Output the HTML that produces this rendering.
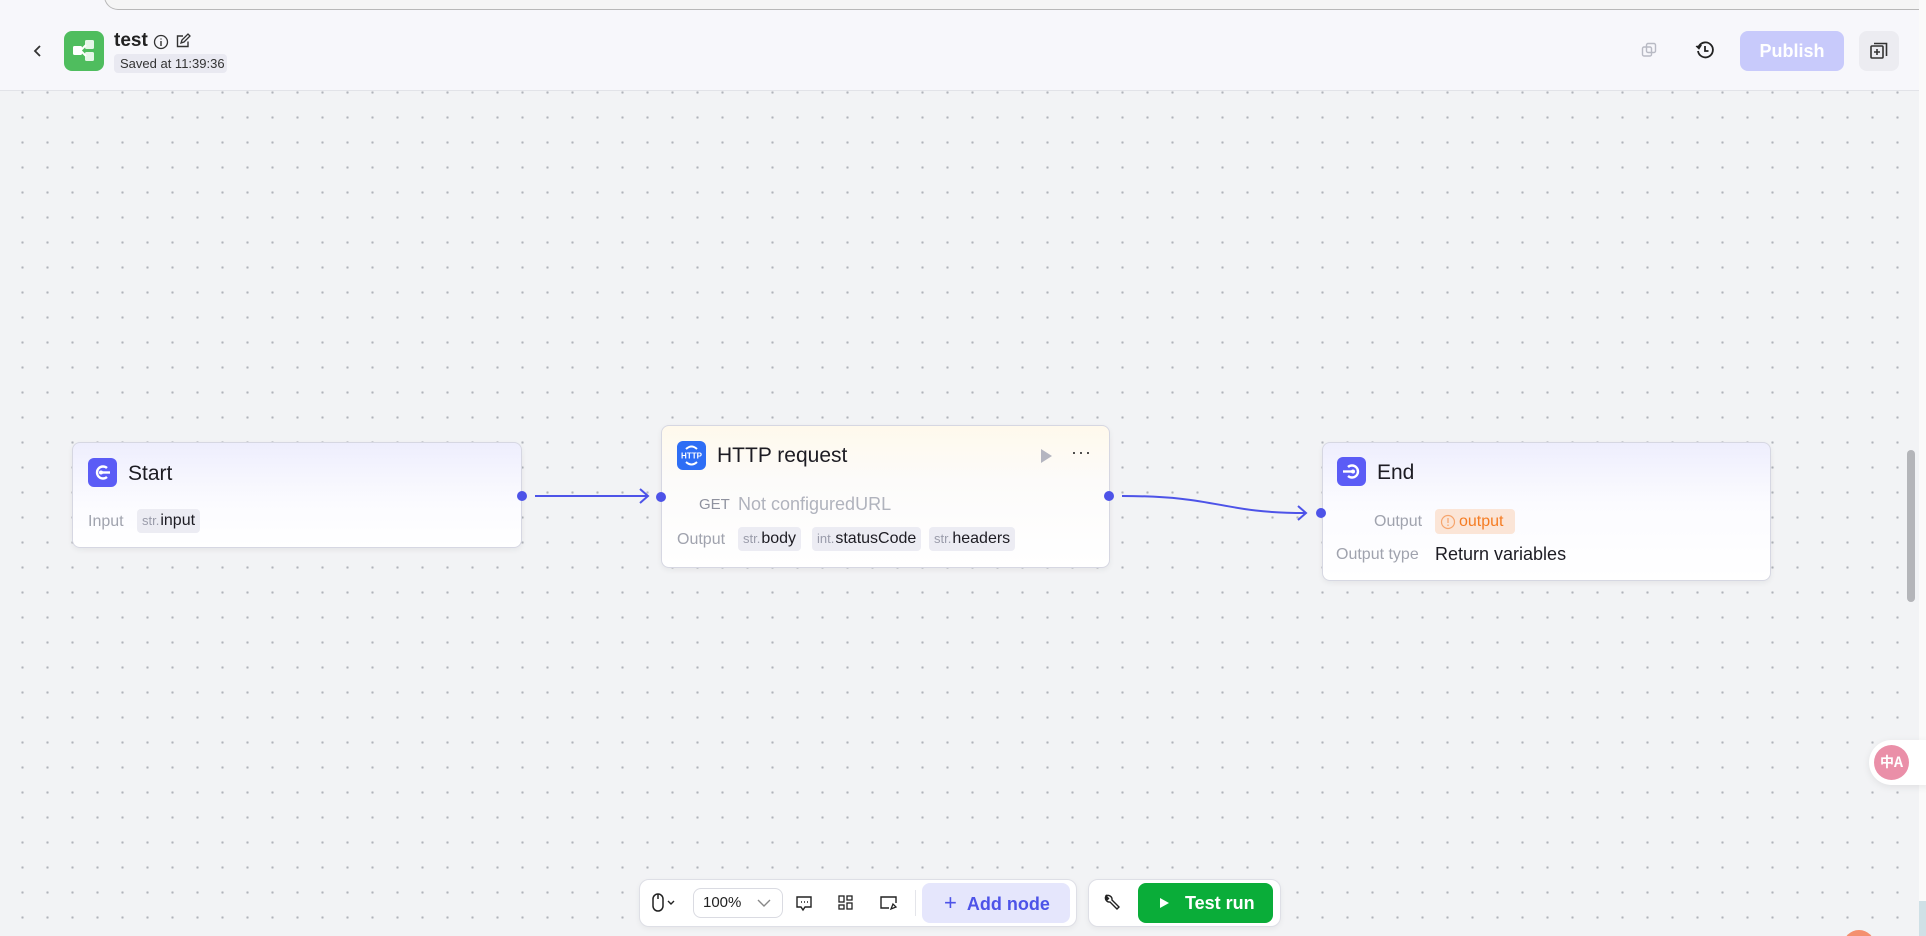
<!DOCTYPE html>
<html><head><meta charset="utf-8"><style>
*{box-sizing:border-box;margin:0;padding:0}
html,body{width:1926px;height:936px;overflow:hidden}
body{position:relative;font-family:"Liberation Sans","Noto Sans CJK SC",sans-serif;background:#f2f3f5;color:#1d1c23}
.canvas{position:absolute;left:0;top:90px;width:1919px;height:846px;background-color:#f2f3f5;background-image:radial-gradient(circle,#b0b3ba 1.1px,transparent 1.3px);background-size:25px 25px;background-position:10px 15px}
.hdr{position:absolute;left:0;top:0;width:1926px;height:91px;background:#f7f7fb;border-bottom:1px solid #e2e3e8}
.topbar{position:absolute;left:104px;top:-6px;width:1830px;height:16px;border:1px solid #b8b8b8;border-radius:0 0 0 14px;background:#f5f5f5;border-top:none}
.node{position:absolute;background:linear-gradient(180deg,#eeeefd 0,#fbfbff 60px,#fff 100%);border:1px solid #d6d7e2;border-radius:8px;box-shadow:0 2px 6px rgba(0,0,0,.06)}
.ico{position:absolute;width:29px;height:29px;border-radius:6px;background:#5b5cf6}
.title{position:absolute;font-size:21px;color:#1d1c23}
.lbl{position:absolute;font-size:16px;color:#a0a3ae}
.tag{position:absolute;height:24px;background:#ececf3;border-radius:4px;font-size:16px;color:#1d1c23;padding:0 5px;line-height:24px}
.tag i{font-style:normal;color:#9a9caa;font-size:13px;margin-right:1px}
.h{position:absolute;width:10px;height:10px;border-radius:50%;background:#4d53e8}
.bar{position:absolute;background:#fff;border:1px solid #dedfe6;border-radius:10px;box-shadow:0 2px 6px rgba(0,0,0,.05)}
</style></head><body>
<div class="canvas"></div>
<div class="hdr">
<div class="topbar"></div>
<svg style="position:absolute;left:31px;top:43px" width="14" height="16" viewBox="0 0 14 16"><path d="M9 3 L4 8 L9 13" fill="none" stroke="#333" stroke-width="1.8"/></svg>
<div style="position:absolute;left:64px;top:31px;width:40px;height:40px;border-radius:8px;background:#4fbd5e"></div>
<svg style="position:absolute;left:64px;top:31px" width="40" height="40" viewBox="0 0 40 40"><rect x="9" y="15" width="9" height="9" rx="1.5" fill="#fff"/><rect x="21" y="9" width="9" height="9" rx="1.5" fill="#e6f6e8"/><rect x="21" y="21" width="9" height="9" rx="1.5" fill="#e6f6e8"/><path d="M17 19 L22 14 M17 20 L22 25" stroke="#fff" stroke-width="2"/></svg>
<div style="position:absolute;left:114px;top:30px;font-size:19px;font-weight:bold;color:#222">test</div>
<svg style="position:absolute;left:153px;top:34px" width="16" height="16" viewBox="0 0 16 16"><circle cx="8" cy="8" r="6.5" fill="none" stroke="#333" stroke-width="1.3"/><path d="M8 7v5M8 4.5v1" stroke="#333" stroke-width="1.4"/></svg>
<svg style="position:absolute;left:175px;top:33px" width="16" height="16" viewBox="0 0 16 16"><path d="M13 8.5V13.5H2.5V3H8" fill="none" stroke="#333" stroke-width="1.4"/><path d="M6 10l1-3 6-6 2 2-6 6z" fill="none" stroke="#333" stroke-width="1.3"/></svg>
<div style="position:absolute;left:114px;top:54px;width:113px;height:19px;background:#e9e9f1;border-radius:4px;font-size:13px;line-height:19px;color:#333;padding-left:6px">Saved at 11:39:36</div>
<svg style="position:absolute;left:1641px;top:42px" width="16" height="16" viewBox="0 0 16 16"><rect x="1.5" y="5" width="9" height="9" rx="1.5" fill="none" stroke="#b8bac4" stroke-width="1.4"/><rect x="5.5" y="1.5" width="9" height="9" rx="1.5" fill="none" stroke="#b8bac4" stroke-width="1.4"/></svg>
<svg style="position:absolute;left:1695px;top:40px" width="20" height="20" viewBox="0 0 20 20"><path d="M4 6 A7.5 7.5 0 1 1 3 11" fill="none" stroke="#222" stroke-width="1.8"/><path d="M1 6 L4 9 L6.5 5" fill="#222" stroke="#222" stroke-width="1"/><path d="M10 6 V11 H13.5" fill="none" stroke="#222" stroke-width="1.8"/></svg>
<div style="position:absolute;left:1740px;top:31px;width:104px;height:40px;border-radius:8px;background:#c8cafb;color:#fff;font-size:18px;font-weight:bold;text-align:center;line-height:40px">Publish</div>
<div style="position:absolute;left:1859px;top:31px;width:40px;height:40px;border-radius:8px;background:#ececf1"></div>
<svg style="position:absolute;left:1869px;top:41px" width="20" height="20" viewBox="0 0 20 20"><rect x="2" y="5" width="12" height="12" rx="1" fill="none" stroke="#333" stroke-width="1.6"/><path d="M5 2.5H17.5V15" fill="none" stroke="#333" stroke-width="1.6"/><path d="M8 8v6M5 11h6" stroke="#333" stroke-width="1.6"/></svg>
</div>

<svg style="position:absolute;left:0;top:0" width="1926" height="936">
<path d="M535 496 L647 496" stroke="#4d53e8" stroke-width="2" fill="none"/>
<path d="M640 489 L648 496 L640 503" stroke="#4d53e8" stroke-width="2" fill="none"/>
<path d="M1122 496 C1220 496 1220 513 1305 513" stroke="#4d53e8" stroke-width="2" fill="none"/>
<path d="M1298 506 L1306 513 L1298 520" stroke="#4d53e8" stroke-width="2" fill="none"/>
</svg>

<div class="node" style="left:72px;top:442px;width:450px;height:106px">
<div class="ico" style="left:15px;top:15px"></div>
<svg style="position:absolute;left:15px;top:15px" width="29" height="29" viewBox="0 0 29 29"><path d="M19 10 A6 6 0 1 0 19 19" fill="none" stroke="#fff" stroke-width="2.4"/><path d="M13 14.5 H22" stroke="#fff" stroke-width="2.4"/><circle cx="13" cy="14.5" r="2" fill="#fff"/></svg>
<div class="title" style="left:55px;top:19px">Start</div>
<div class="lbl" style="left:15px;top:70px">Input</div>
<div class="tag" style="left:64px;top:66px"><i>str.</i>input</div>
</div>
<div class="h" style="left:517px;top:491px"></div>

<div class="node" style="left:661px;top:425px;width:449px;height:143px;background:linear-gradient(180deg,#fff9ec 0,#fcfbfa 55px,#fff 100%)">
<div class="ico" style="left:15px;top:15px;background:#2e6ef5"></div>
<svg style="position:absolute;left:15px;top:15px" width="29" height="29" viewBox="0 0 29 29"><path d="M9 8 Q14.5 3 20 8" fill="none" stroke="#fff" stroke-width="2"/><path d="M9 21 Q14.5 26 20 21" fill="none" stroke="#fff" stroke-width="2"/><text x="14.5" y="17.5" font-size="8" font-weight="bold" fill="#fff" text-anchor="middle" font-family="Liberation Sans">HTTP</text></svg>
<div class="title" style="left:55px;top:18px">HTTP request</div>
<svg style="position:absolute;left:377px;top:22px" width="14" height="16" viewBox="0 0 14 16"><path d="M2 1 L13 8 L2 15Z" fill="#b4b5c0"/></svg>
<div style="position:absolute;left:409px;top:16px;font-size:18px;letter-spacing:1px;color:#333">···</div>
<div class="lbl" style="left:37px;top:70px;font-size:15px;color:#8f929f">GET</div>
<div class="lbl" style="left:76px;top:68px;font-size:18px;color:#b0b3bd">Not configuredURL</div>
<div class="lbl" style="left:15px;top:105px">Output</div>
<div class="tag" style="left:76px;top:101px"><i>str.</i>body</div>
<div class="tag" style="left:150px;top:101px"><i>int.</i>statusCode</div>
<div class="tag" style="left:267px;top:101px"><i>str.</i>headers</div>
</div>
<div class="h" style="left:656px;top:492px"></div>
<div class="h" style="left:1104px;top:491px"></div>

<div class="node" style="left:1322px;top:442px;width:449px;height:139px">
<div class="ico" style="left:14px;top:14px"></div>
<svg style="position:absolute;left:14px;top:14px" width="29" height="29" viewBox="0 0 29 29"><path d="M11 10 A6 6 0 1 1 11 19" fill="none" stroke="#fff" stroke-width="2.4"/><path d="M6 14.5 H16" stroke="#fff" stroke-width="2.4"/><circle cx="16" cy="14.5" r="2" fill="#fff"/></svg>
<div class="title" style="left:54px;top:18px">End</div>
<div class="lbl" style="left:51px;top:70px">Output</div>
<div style="position:absolute;left:112px;top:66px;width:80px;height:25px;background:#fbe5d7;border-radius:4px;font-size:16px;line-height:25px;color:#f57c23;padding-left:24px">output</div>
<svg style="position:absolute;left:117px;top:71px" width="16" height="16" viewBox="0 0 16 16"><circle cx="8" cy="8" r="6.5" fill="none" stroke="#f6a56e" stroke-width="1.2"/><path d="M8 4v5M8 10.5v1.5" stroke="#f6a56e" stroke-width="1.2"/></svg>
<div class="lbl" style="left:13px;top:103px">Output type</div>
<div style="position:absolute;left:112px;top:101px;font-size:18px;color:#1d1c23">Return variables</div>
</div>
<div class="h" style="left:1316px;top:508px"></div>

<div style="position:absolute;left:1907px;top:450px;width:8px;height:152px;border-radius:4px;background:#b4b5b9"></div>
<div style="position:absolute;left:1919px;top:0;width:7px;height:936px;background:#fafafa"></div>
<div style="position:absolute;left:1919px;top:901px;width:7px;height:35px;background:#cfe0e6"></div>

<div style="position:absolute;left:1869px;top:740px;width:60px;height:45px;border-radius:23px 0 0 23px;background:#fff;box-shadow:0 2px 8px rgba(0,0,0,.08)"></div>
<div style="position:absolute;left:1874px;top:745px;width:35px;height:35px;border-radius:50%;background:#ea8fa8;color:#fff;font-size:14px;font-weight:bold;text-align:center;line-height:35px;font-family:'Noto Sans CJK SC',sans-serif">中A</div>
<div style="position:absolute;left:1843px;top:930px;width:32px;height:32px;border-radius:50%;background:#f4906f"></div>

<div class="bar" style="left:639px;top:879px;width:438px;height:48px"></div>
<svg style="position:absolute;left:650px;top:891px" width="30" height="24" viewBox="0 0 30 24"><rect x="3" y="3" width="10" height="17" rx="5" fill="none" stroke="#222" stroke-width="1.5"/><path d="M8 3v5" stroke="#222" stroke-width="1.5"/><path d="M18 10l3 3 3-3" fill="none" stroke="#222" stroke-width="1.4"/></svg>
<div style="position:absolute;left:693px;top:888px;width:90px;height:30px;border:1px solid #dadbe2;border-radius:8px;font-size:15px;line-height:28px;padding-left:9px;color:#222">100%</div>
<svg style="position:absolute;left:756px;top:897px" width="16" height="12" viewBox="0 0 16 12"><path d="M2 3l6 6 6-6" fill="none" stroke="#888" stroke-width="1.4"/></svg>
<svg style="position:absolute;left:795px;top:894px" width="18" height="18" viewBox="0 0 18 18"><path d="M2 3h14v10H10l-2 3-2-3H2z" fill="none" stroke="#222" stroke-width="1.4"/><path d="M6 8h1M9 8h1M12 8h1" stroke="#222" stroke-width="1.6"/></svg>
<svg style="position:absolute;left:837px;top:894px" width="18" height="18" viewBox="0 0 18 18"><rect x="2" y="2" width="5" height="6" fill="none" stroke="#222" stroke-width="1.3"/><rect x="10" y="2" width="5" height="4" fill="none" stroke="#222" stroke-width="1.3"/><rect x="2" y="11" width="5" height="4" fill="none" stroke="#222" stroke-width="1.3"/><rect x="10" y="9" width="5" height="6" fill="none" stroke="#222" stroke-width="1.3"/></svg>
<svg style="position:absolute;left:879px;top:894px" width="20" height="18" viewBox="0 0 20 18"><path d="M10 14H2V3h15v6" fill="none" stroke="#222" stroke-width="1.4"/><path d="M12 15l2-5 3 3z" fill="none" stroke="#222" stroke-width="1.3"/></svg>
<div style="position:absolute;left:915px;top:890px;width:1px;height:26px;background:#e4e5ea"></div>
<div style="position:absolute;left:922px;top:883px;width:148px;height:40px;border-radius:8px;background:#e5e6fc;color:#4d53e8;font-size:18px;font-weight:bold;line-height:40px;padding-left:22px"><span style="font-weight:normal;font-size:22px;margin-right:10px">+</span>Add node</div>
<div class="bar" style="left:1088px;top:879px;width:193px;height:48px"></div>
<svg style="position:absolute;left:1102px;top:893px" width="20" height="20" viewBox="0 0 20 20"><path d="M4 3a4 4 0 0 0 4 6l7 7 2-2-7-7a4 4 0 0 0-6-4l2.5 2.5-1.5 1.5z" fill="none" stroke="#222" stroke-width="1.4"/></svg>
<div style="position:absolute;left:1138px;top:883px;width:135px;height:40px;border-radius:8px;background:#0aad39;color:#fff;font-size:18px;font-weight:bold;line-height:40px;padding-left:47px">Test run</div>
<svg style="position:absolute;left:1157px;top:896px" width="14" height="14" viewBox="0 0 14 14"><path d="M3 2l9 5-9 5z" fill="#fff"/></svg>
</body></html>
